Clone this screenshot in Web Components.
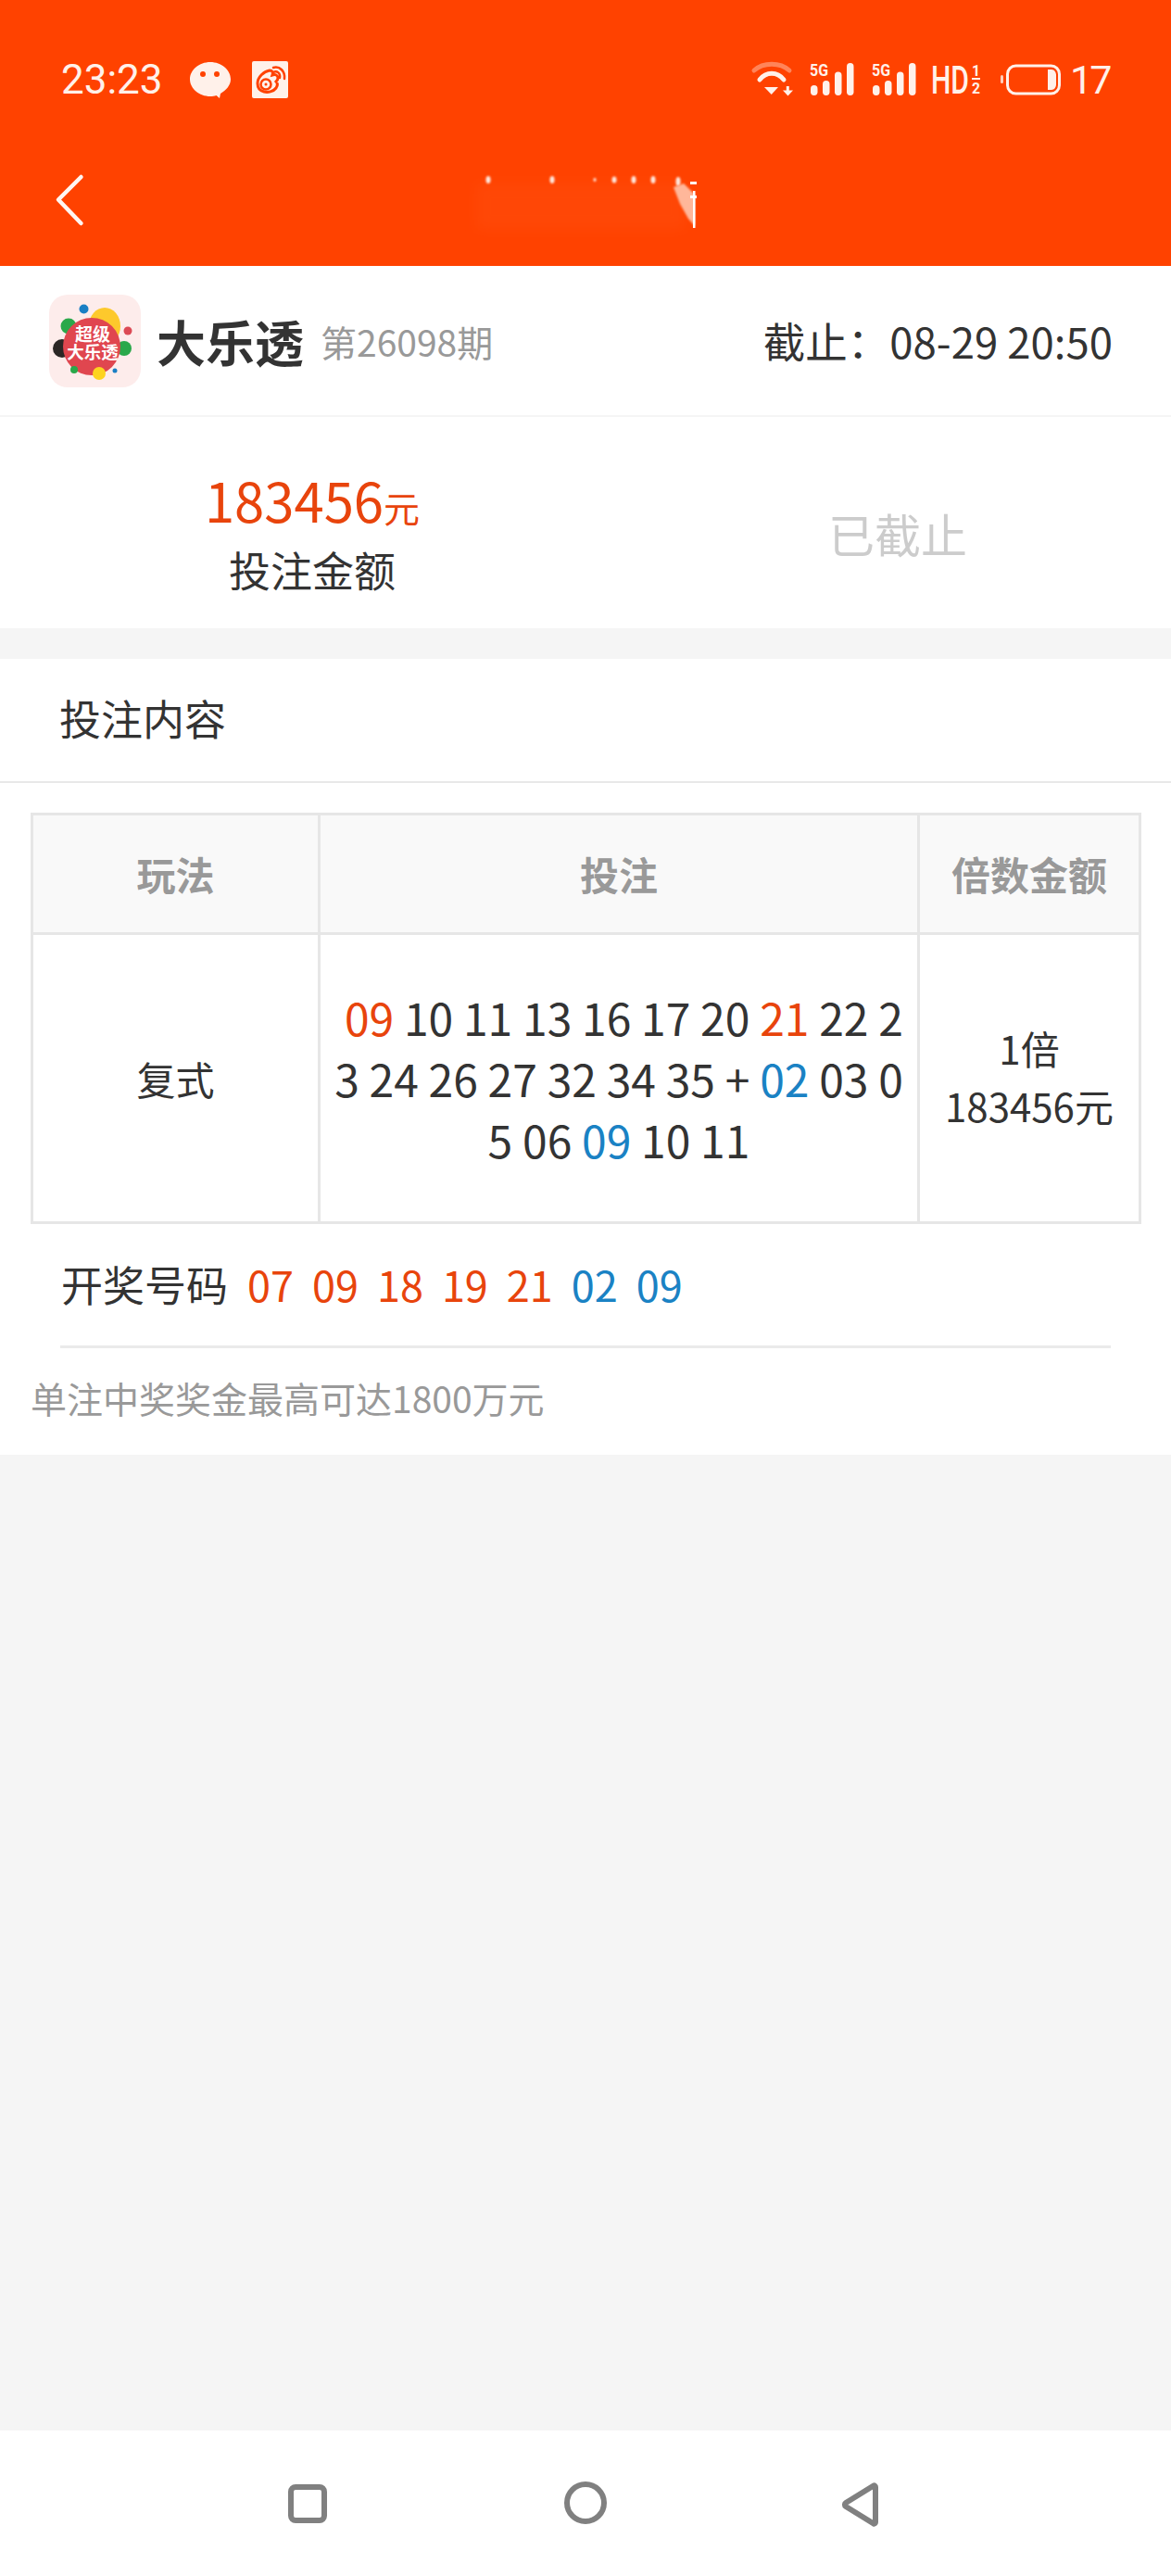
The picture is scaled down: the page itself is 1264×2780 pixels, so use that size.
<!DOCTYPE html>
<html lang="zh-CN">
<head>
<meta charset="utf-8">
<title>大乐透</title>
<style>
  html, body { margin: 0; padding: 0; }
  body {
    display: flex;
    flex-direction: column;
    height: 2780px;
    background: #f5f5f5;
    font-family: "Noto Sans CJK SC", "Noto Sans", sans-serif;
    color: #333;
  }
  .card { background: #fff; display: block; }
  .spacer { flex: 1; }
</style>
</head>
<body>
  <app-header></app-header>
  <lottery-info name="大乐透" issue="第26098期" deadline="截止：08-29 20:50"></lottery-info>
  <bet-summary amount="183456" label="投注金额" status="已截止"></bet-summary>
  <div class="card" style="margin-top:33px">
    <section-title>投注内容</section-title>
    <bet-table></bet-table>
    <draw-result></draw-result>
    <prize-note>单注中奖奖金最高可达1800万元</prize-note>
  </div>
  <div class="spacer"></div>
  <bottom-nav></bottom-nav>

<script>
  class Base extends HTMLElement {
    constructor() {
      super();
      this.attachShadow({ mode: "open" });
    }

    connectedCallback() {
      this.shadowRoot.innerHTML = this.template();
    }
  }

  class AppHeader extends Base {
    template() {
      return `
        <style>
          :host { display: block; background: #ff4200; height: 287px; }
          .status {
            display: flex;
            align-items: center;
            height: 40px;
            padding: 66px 66px 39px 66px;
            color: #fff1ea;
            font: 400 43px/40px Roboto, sans-serif;
          }
          .time { width: 139px; font-size: 44px; }
          .wechat { margin-right: 23px; }
          .grow { flex: 1; }
          svg { display: block; flex: none; overflow: visible; }
          .sig { margin-left: 17px; }
          .sig2 { margin-left: 19px; }
          .hd { margin-left: 16px; }
          .bat { margin-left: 21px; }
          .num { margin-left: 9px; letter-spacing: -3px; width: 43px; }
          .title { display: flex; align-items: center; height: 142px; padding-left: 60px; }
          .mask { margin-left: 410px; overflow: hidden; }
        </style>
        <div class="status">
          <span class="time">23:23</span>
          <svg class="wechat" width="44" height="40" viewBox="0 0 44 40">
            <path d="M22 1C10 1 0 9.500 0 19.500C0 29.500 10 38 22 38C24.500 38 26.500 37.600 28.500 37L32 40L33 35C39 31.500 44 26 44 19.500C44 9.500 34 1 22 1Z" fill="#fff1ea"/>
            <circle cx="14" cy="14" r="3" fill="#ff4200"/>
            <circle cx="29" cy="14" r="3" fill="#ff4200"/>
          </svg>
          <svg width="39" height="40" viewBox="0 0 39 40">
            <rect width="39" height="40" rx="2" fill="#fff1ea"/>
            <path d="M6 24C6 17 13 11 19 10C22 10 23 12 22 15C25 14 28 15 28 18C28 20 27 21 26 22C28 24 28 26 26 29C23 33 17 34 13 33C9 32 6 29 6 24Z" fill="none" stroke="#ff4200" stroke-width="3"/>
            <circle cx="15" cy="25" r="5.500" fill="none" stroke="#ff4200" stroke-width="2.500"/>
            <circle cx="15" cy="25" r="1.500" fill="#ff4200"/>
            <path d="M23 12C27 10 31 13 30 18M23 7C30 5 36 11 35 19" fill="none" stroke="#ff4200" stroke-width="2.500" stroke-linecap="round"/>
          </svg>
          <div class="grow"></div>
          <svg class="wifi" width="46" height="36" viewBox="0 0 46 36">
            <path d="M3 8C13 -1 31 -1 41 8" fill="none" stroke="#fff" stroke-opacity=".35" stroke-width="5" stroke-linecap="round"/>
            <path d="M9 18C16 9 28 9 35 18" fill="none" stroke="#fff1ea" stroke-width="5" stroke-linecap="round"/>
            <path d="M14 26H29L21.700 34Z" fill="#fff1ea"/>
            <path d="M39.300 25V31" stroke="#fff1ea" stroke-width="3"/>
            <path d="M34 29.500H45L39.500 35.500Z" fill="#fff1ea"/>
          </svg>
          ${this.signal("sig")}
          ${this.signal("sig2")}
          <svg class="hd" width="54" height="34" viewBox="0 0 54 34">
            <text x="0" y="32" font-family="Roboto" font-weight="500" font-size="43" fill="#fff1ea" textLength="41" lengthAdjust="spacingAndGlyphs">HD</text>
            <text x="44" y="13" font-family="Roboto" font-weight="700" font-size="16" fill="#fff1ea" textLength="9" lengthAdjust="spacingAndGlyphs">1</text>
            <rect x="44" y="15" width="9" height="2" fill="#fff1ea"/>
            <text x="44" y="32" font-family="Roboto" font-weight="700" font-size="17" fill="#fff1ea" textLength="9" lengthAdjust="spacingAndGlyphs">2</text>
          </svg>
          <svg class="bat" width="66" height="34" viewBox="0 0 66 34">
            <rect x="0" y="12" width="3" height="9" rx="1.500" fill="#fff1ea" fill-opacity=".8"/>
            <rect x="7.500" y="2" width="56" height="30" rx="9" fill="none" stroke="#fff1ea" stroke-width="3"/>
            <path d="M51 6H55C58 6 60 9 60 12V22C60 25 58 28 55 28H51Z" fill="#fff1ea"/>
          </svg>
          <span class="num">17</span>
        </div>
        <div class="title">
          <svg width="30" height="56" viewBox="0 0 30 56">
            <path d="M27.500 3L3 27.500L27.500 53" fill="none" stroke="#fff6f2" stroke-width="4.500" stroke-linecap="round" stroke-linejoin="round"/>
          </svg>
          <svg class="mask" width="260" height="84" viewBox="0 0 260 84">
            <defs>
              <filter id="soft" x="-20%" y="-20%" width="140%" height="140%"><feGaussianBlur stdDeviation="1"/></filter>
              <filter id="wide" x="-20%" y="-40%" width="140%" height="180%"><feGaussianBlur stdDeviation="7"/></filter>
            </defs>
            <rect x="14" y="24" width="226" height="50" fill="#ff5f24" opacity=".2" filter="url(#wide)"/>
            <g fill="#ffe9df" filter="url(#soft)">
              <ellipse cx="27" cy="20" rx="2.500" ry="4"/>
              <ellipse cx="96" cy="20" rx="2.500" ry="4"/>
              <ellipse cx="142" cy="20" rx="1.500" ry="2"/>
              <ellipse cx="163" cy="20" rx="2.500" ry="3.500"/>
              <ellipse cx="184" cy="20" rx="2.500" ry="4"/>
              <ellipse cx="205" cy="20" rx="2.500" ry="4"/>
              <ellipse cx="232" cy="22" rx="2.500" ry="5"/>
            </g>
            <path d="M227 28L238 24L250 36V70L243 62L234 46Z" fill="#ffb79a" filter="url(#soft)"/>
            <rect x="248" y="32" width="2.500" height="40" fill="#fff"/>
            <rect x="245" y="22" width="7" height="3" fill="#fff"/>
            <rect x="245" y="37" width="7" height="3" fill="#fff"/>
          </svg>
        </div>
      `;
    }

    signal(cls) {
      return `
        <svg class="${cls}" width="48" height="36" viewBox="0 0 48 36">
          <text x="0" y="13.500" font-family="Roboto" font-weight="700" font-size="19" fill="#fff1ea" textLength="20" lengthAdjust="spacingAndGlyphs">5G</text>
          <rect x="1" y="24" width="7.500" height="11" rx="3.700" fill="#fff1ea"/>
          <rect x="14" y="19" width="7.500" height="16" rx="3.700" fill="#fff1ea"/>
          <rect x="27" y="9.500" width="7.500" height="25.500" rx="3.700" fill="#fff1ea"/>
          <rect x="40" y="0" width="7.500" height="35" rx="3.700" fill="#fff1ea"/>
        </svg>
      `;
    }
  }

  class LotteryInfo extends Base {
    template() {
      return `
        <style>
          :host {
            display: flex;
            align-items: center;
            height: 161px;
            padding: 0 63px 0 53px;
            background: #fff;
            border-bottom: 2px solid #f5f5f5;
            color: #333;
          }
          svg { display: block; flex: none; margin-right: 17px; }
          .name { font-size: 53px; font-weight: 700; line-height: 60px; }
          .issue { font-size: 39px; color: #999; margin-left: 18px; line-height: 60px; }
          .grow { flex: 1; }
          .deadline { font-size: 45.500px; line-height: 60px; padding-bottom: 2px; }
        </style>
        <svg width="99" height="100" viewBox="0 0 99 100">
          <rect width="99" height="100" rx="20" fill="#fdeceb"/>
          <ellipse cx="60" cy="34" rx="17" ry="20" fill="#fdc92c"/>
          <circle cx="37.500" cy="15.500" r="5" fill="#1a7fc4"/>
          <circle cx="14" cy="58" r="10" fill="#2b2625"/>
          <circle cx="81" cy="58" r="8" fill="#2aa84a"/>
          <circle cx="21" cy="34" r="8.500" fill="#2aa84a"/>
          <circle cx="85" cy="39" r="4.500" fill="#dc4a55"/>
          <circle cx="46" cy="56" r="31" fill="#e0464f"/>
          <circle cx="27" cy="81" r="4" fill="#2aa84a"/>
          <circle cx="54" cy="85" r="7" fill="#fdd31f"/>
          <circle cx="71" cy="82" r="2.500" fill="#1a7fc4"/>
          <text x="47" y="50" text-anchor="middle" font-size="19" font-weight="700" fill="#fff">超级</text>
          <text x="47" y="69" text-anchor="middle" font-size="18.500" font-weight="700" fill="#fff">大乐透</text>
        </svg>
        <span class="name">${this.getAttribute("name")}</span>
        <span class="issue">${this.getAttribute("issue")}</span>
        <div class="grow"></div>
        <span class="deadline">${this.getAttribute("deadline")}</span>
      `;
    }
  }

  class BetSummary extends Base {
    template() {
      return `
        <style>
          :host {
            display: grid;
            grid-template-columns: 674px 590px;
            height: 228px;
            background: #fff;
          }
          .col {
            display: flex;
            flex-direction: column;
            align-items: center;
            justify-content: center;
            padding-top: 22px;
          }
          .amount { color: #e8440c; font-size: 58px; line-height: 76px; }
          .unit { font-size: 39px; }
          .label { font-size: 45px; line-height: 60px; color: #333; margin-bottom: 4px; }
          .status { font-size: 50px; color: #ccc; line-height: 70px; }
        </style>
        <div class="col">
          <div class="amount">${this.getAttribute("amount")}<span class="unit">元</span></div>
          <div class="label">${this.getAttribute("label")}</div>
        </div>
        <div class="col">
          <div class="status">${this.getAttribute("status")}</div>
        </div>
      `;
    }
  }

  class SectionTitle extends Base {
    template() {
      return `
        <style>
          :host {
            display: flex;
            align-items: center;
            height: 126px;
            padding: 0 0 6px 64px;
            border-bottom: 2px solid #e8e8e8;
            font-size: 45px;
            color: #333;
          }
        </style>
        <slot></slot>
      `;
    }
  }

  class BetTable extends Base {
    template() {
      return `
        <style>
          :host { display: block; margin: 32px 0 0 33px; width: 1199px; }
          .grid {
            display: grid;
            grid-template-columns: 310px 647px 239px;
            grid-template-rows: 129px 312px;
            border-top: 3px solid #e6e6e6;
            border-left: 3px solid #e6e6e6;
          }
          .cell {
            display: flex;
            flex-direction: column;
            align-items: center;
            justify-content: center;
            text-align: center;
            border-right: 3px solid #e6e6e6;
            border-bottom: 3px solid #e6e6e6;
            font-size: 42px;
            color: #333;
            box-sizing: border-box;
          }
          .head { background: #f9f9f9; color: #999; font-weight: 700; padding-bottom: 2px; }
          .numbers {
            padding-bottom: 2px;
            font-size: 48px;
            line-height: 66px;
            white-space: nowrap;
          }
          .red { color: #e8440c; }
          .blue { color: #1a82c4; }
          .times { line-height: 62px; padding-bottom: 4px; }
        </style>
        <div class="grid">
          <div class="cell head">玩法</div>
          <div class="cell head">投注</div>
          <div class="cell head">倍数金额</div>
          <div class="cell">复式</div>
          <div class="cell numbers">
            <div>&nbsp;<span class="red">09</span> 10 11 13 16 17 20 <span class="red">21</span> 22 2</div>
            <div>3 24 26 27 32 34 35 + <span class="blue">02</span> 03 0</div>
            <div>5 06 <span class="blue">09</span> 10 11</div>
          </div>
          <div class="cell times"><div>1倍</div><div>183456元</div></div>
        </div>
      `;
    }
  }

  class DrawResult extends Base {
    template() {
      const reds = ["07", "09", "18", "19", "21"];
      const blues = ["02", "09"];
      const ball = (n, c) => `<span class="${c}">${n}</span>`;
      return `
        <style>
          :host {
            display: flex;
            align-items: center;
            height: 128px;
            margin: 0 65px;
            padding: 0 0 3px 1px;
            box-sizing: content-box;
            border-bottom: 3px solid #eaeaea;
            font-size: 45px;
            color: #333;
          }
          .label { margin-right: 21px; }
          span.red, span.blue { margin-right: 20px; }
          .red { color: #e8440c; }
          .blue { color: #1a82c4; }
        </style>
        <span class="label">开奖号码</span>
        ${reds.map((n) => ball(n, "red")).join("")}
        ${blues.map((n) => ball(n, "blue")).join("")}
      `;
    }
  }

  class PrizeNote extends Base {
    template() {
      return `
        <style>
          :host {
            display: flex;
            align-items: center;
            height: 105px;
            padding: 0 0 10px 33px;
            font-size: 39px;
            color: #999;
          }
        </style>
        <slot></slot>
      `;
    }
  }

  class BottomNav extends Base {
    template() {
      return `
        <style>
          :host {
            display: flex;
            align-items: flex-start;
            height: 157px;
            padding-left: 311px;
            background: #fff;
          }
          svg { display: block; flex: none; margin-top: 55px; }
        </style>
        <svg width="42" height="46" viewBox="0 0 42 46" style="margin-top:58px">
          <rect x="3" y="3" width="36" height="36" rx="5" fill="none" stroke="#808080" stroke-width="6"/>
        </svg>
        <svg width="46" height="46" viewBox="0 0 46 46" style="margin-left:256px">
          <circle cx="23" cy="23" r="20" fill="none" stroke="#808080" stroke-width="6"/>
        </svg>
        <svg width="40" height="50" viewBox="0 0 40 50" style="margin-left:253px">
          <path d="M35 4.500C36 4 37 5 37 6V44C37 45 36 46 35 45.500L5 27C3.500 26 3.500 24 5 23Z" fill="none" stroke="#808080" stroke-width="6" stroke-linejoin="round"/>
        </svg>
      `;
    }
  }

  customElements.define("app-header", AppHeader);
  customElements.define("lottery-info", LotteryInfo);
  customElements.define("bet-summary", BetSummary);
  customElements.define("section-title", SectionTitle);
  customElements.define("bet-table", BetTable);
  customElements.define("draw-result", DrawResult);
  customElements.define("prize-note", PrizeNote);
  customElements.define("bottom-nav", BottomNav);
</script>
</body>
</html>
